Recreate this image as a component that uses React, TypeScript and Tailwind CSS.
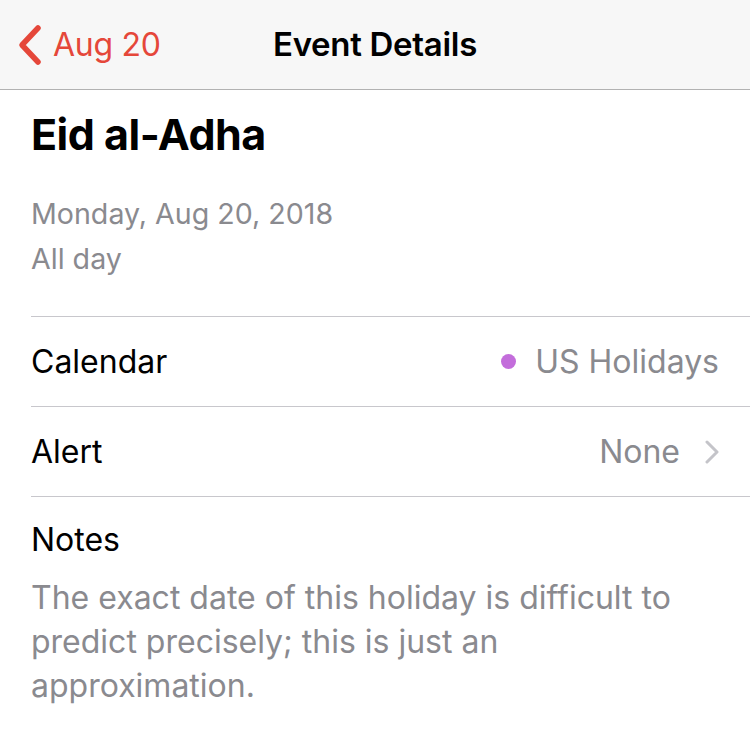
import React from "react";

export default function App() {
  return (
    <div className="w-[750px] h-[746px] bg-white overflow-hidden" style={{ fontFamily: "Inter, 'Noto Sans', sans-serif" }}>
      <div className="h-[90px] bg-[#f7f7f7] border-b border-[#b2b2b2] flex items-center relative">
        <div className="flex items-center pl-[17px] text-[#e5473a]">
          <svg width="26" height="42" viewBox="0 0 26 42" className="mr-[10px]">
            <path d="M21 4 L5 21 L21 38" fill="none" stroke="#e5473a" strokeWidth="5.5" strokeLinecap="round" strokeLinejoin="round" />
          </svg>
          <span className="text-[32px] tracking-[-0.3px]">Aug 20</span>
        </div>
        <div className="absolute left-0 right-0 text-center text-[33px] font-semibold text-black tracking-[-0.3px] pointer-events-none">
          Event Details
        </div>
      </div>
      <div className="pl-[31px]">
        <div className="pt-[18px] text-[43px] font-bold text-black leading-[52px] tracking-[-0.5px]">Eid al-Adha</div>
        <div className="pt-[31px] text-[28.6px] text-[#8a8a8f] leading-[45px]">
          <div>Monday, Aug 20, 2018</div>
          <div>All day</div>
        </div>
        <div className="mt-[35px] border-t border-[#c8c7cc]">
          <div className="h-[90px] flex items-center justify-between pr-[31px] border-b border-[#c8c7cc]">
            <span className="text-[32px] text-black">Calendar</span>
            <span className="flex items-center text-[32px] text-[#8a8a8f]">
              <span className="w-[15px] h-[15px] rounded-full bg-[#c36ddb] mr-[19px]" />
              US Holidays
            </span>
          </div>
          <div className="h-[90px] flex items-center justify-between pr-[31px] border-b border-[#c8c7cc]">
            <span className="text-[32px] text-black">Alert</span>
            <span className="flex items-center text-[32px] text-[#8a8a8f]">
              None
              <svg width="14" height="24" viewBox="0 0 14 24" className="ml-[25px]">
                <path d="M2 2 L12 12 L2 22" fill="none" stroke="#c4c4c9" strokeWidth="3" strokeLinecap="round" strokeLinejoin="round" />
              </svg>
            </span>
          </div>
        </div>
        <div className="pt-[21px] pr-[31px]">
          <div className="text-[32px] text-black leading-[44px]">Notes</div>
          <div className="mt-[14px] text-[32px] text-[#8a8a8f] leading-[44px]">
            The exact date of this holiday is difficult to predict precisely; this is just an approximation.
          </div>
        </div>
      </div>
    </div>
  );
}
